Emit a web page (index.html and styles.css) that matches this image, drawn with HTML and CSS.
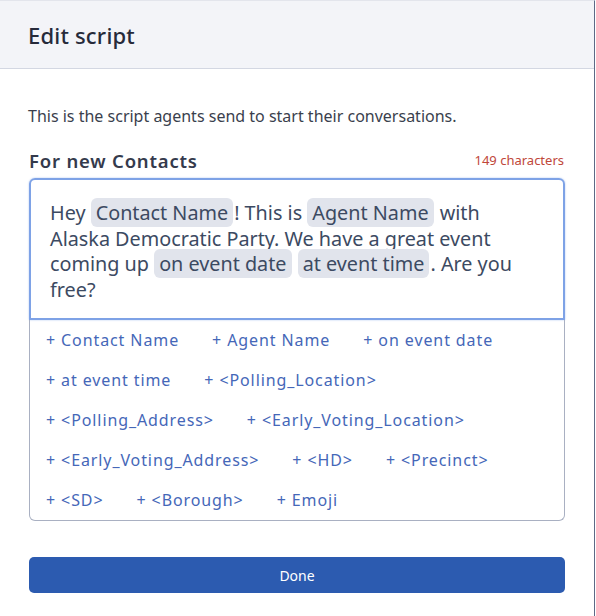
FILE: index.html
```html
<!DOCTYPE html>
<html lang="en">
<head>
    <meta charset="UTF-8">
    <meta name="viewport" content="width=device-width, initial-scale=1.0">
    <link rel="stylesheet" href="styles.css">
    <title>Edit script</title>
</head>
<body>
    <div class="modal">
        <div class="modal-header">
            <h2>Edit script</h2>
        </div>

        <div class="modal-body">
            <p class="intro">This is the script agents send to start their conversations.</p>

            <div class="label-row">
                <span class="label">For new Contacts</span>
                <span class="count">149 characters</span>
            </div>

            <div class="editor">
                Hey <span class="tag">Contact Name</span>! This is <span class="tag">Agent Name</span> with<br>
                Alaska Democratic Party. We have a great event<br>
                coming up <span class="tag">on event date</span> <span class="tag">at event time</span>. Are you<br>
                free?
            </div>

            <div class="fields">
                <div class="field-row">
                    <span class="field">+ Contact Name</span>
                    <span class="field">+ Agent Name</span>
                    <span class="field">+ on event date</span>
                </div>
                <div class="field-row">
                    <span class="field">+ at event time</span>
                    <span class="field">+ &lt;Polling_Location&gt;</span>
                </div>
                <div class="field-row">
                    <span class="field">+ &lt;Polling_Address&gt;</span>
                    <span class="field">+ &lt;Early_Voting_Location&gt;</span>
                </div>
                <div class="field-row">
                    <span class="field">+ &lt;Early_Voting_Address&gt;</span>
                    <span class="field">+ &lt;HD&gt;</span>
                    <span class="field">+ &lt;Precinct&gt;</span>
                </div>
                <div class="field-row">
                    <span class="field">+ &lt;SD&gt;</span>
                    <span class="field">+ &lt;Borough&gt;</span>
                    <span class="field">+ Emoji</span>
                </div>
            </div>

            <button class="done">Done</button>
        </div>
    </div>
</body>
</html>
```

FILE: styles.css
```css
body {
    margin: 0;
    font-family: 'Noto Sans', sans-serif;
    color: #3a4559;
    background-color: #fff;
}

.modal {
    width: 595px;
    height: 616px;
    border-right: 1px solid #5d6986;
    border-top: 1px solid #e3e5ec;
    box-sizing: border-box;
}

.modal-header {
    height: 68px;
    background-color: #f3f4f8;
    border-bottom: 1px solid #d3d7e2;
    padding: 0 28px;
    display: flex;
    align-items: center;
    box-sizing: border-box;
}

h2 {
    margin: 0;
    font-size: 22px;
    font-weight: 500;
    color: #262a3a;
    letter-spacing: 0.2px;
}

.modal-body {
    padding: 0 29px 0 29px;
}

.intro {
    margin: 36px 0 0 -1px;
    font-size: 16px;
    line-height: 22px;
    color: #3a3f4d;
}

.label-row {
    display: flex;
    justify-content: space-between;
    align-items: center;
    margin-top: 21px;
    height: 24px;
}

.label {
    font-size: 18.5px;
    font-weight: 600;
    color: #343a4c;
    letter-spacing: 0.8px;
}

.count {
    font-size: 13px;
    color: #c0473a;
    margin-right: 1px;
}

.editor {
    margin-top: 6px;
    border: 2px solid #7ea2e6;
    border-radius: 6px 6px 0 0;
    box-shadow: 0 0 2px #a9c2f0;
    padding: 20px 18px 16px 19px;
    font-size: 19.8px;
    line-height: 25.5px;
    color: #3c4a62;
}

.tag {
    background-color: #e1e4ec;
    border-radius: 6px;
    padding: 1px 5px;
    margin: 0 1px 0 0;
}

.fields {
    border: 1px solid #a9b0c2;
    border-top: none;
    border-radius: 0 0 6px 6px;
    padding: 0 16px;
}

.field-row {
    display: flex;
    column-gap: 33px;
    height: 40px;
    align-items: center;
}

.field {
    font-size: 16px;
    color: #4567b8;
    letter-spacing: 0.9px;
}

.done {
    display: block;
    width: 100%;
    margin-top: 36px;
    height: 36px;
    border: none;
    border-radius: 5px;
    background-color: #2c5bb0;
    color: #fff;
    font-family: 'Noto Sans', sans-serif;
    font-size: 14px;
}
```
